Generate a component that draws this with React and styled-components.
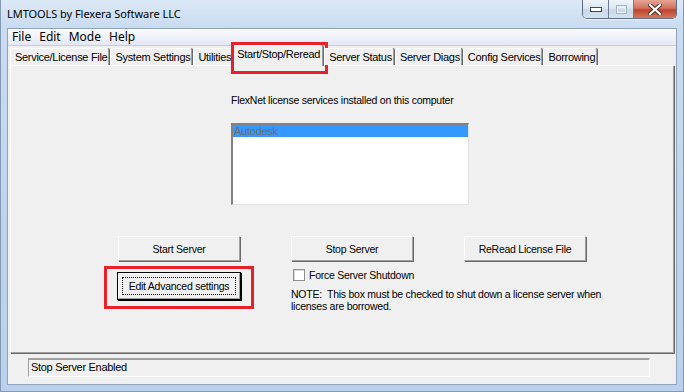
import React from 'react';
import styled, { createGlobalStyle } from 'styled-components';

const Global = createGlobalStyle`
  html, body { margin: 0; padding: 0; background: #fff; }
  body {
    width: 684px; height: 392px; overflow: hidden;
    font-family: "Liberation Sans", Arial, sans-serif;
  }
  * { box-sizing: border-box; }
`;

const Window = styled.div`
  width: 684px;
  height: 392px;
  display: flex;
  flex-direction: column;
  background: linear-gradient(180deg, #dce9f7 0px, #cadcf0 26px, #bed4ec 60%, #b9d1ea 100%);
  border: 1px solid #8399b5;
  border-top: none;
  padding: 0 6px 6px 6px;
`;

const TitleBar = styled.div`
  height: 28px;
  flex: none;
  display: flex;
  align-items: flex-start;
  justify-content: space-between;
`;

const Title = styled.div`
  font-family: "Noto Sans", "Open Sans", sans-serif;
  font-size: 11px;
  color: #000;
  margin-top: 6px;
  letter-spacing: -0.05px;
`;

const Caption = styled.div`
  display: flex;
  height: 19px;
  border: 1px solid #5d6d84;
  border-top: none;
  border-radius: 0 0 5px 5px;
  overflow: hidden;
  box-shadow: 0 1px 0 rgba(255,255,255,0.6);
`;

const CapBtn = styled.div`
  width: ${p => p.$w}px;
  height: 100%;
  display: flex;
  align-items: center;
  justify-content: center;
  border-left: ${p => (p.$first ? 'none' : '1px solid #6d7c92')};
  background: ${p =>
    p.$close
      ? 'linear-gradient(180deg, #e8a493 0%, #d0735f 45%, #c0432c 55%, #d27a5e 100%)'
      : 'linear-gradient(180deg, #eef3fa 0%, #dde7f3 45%, #c9d7e8 55%, #d6e2f0 100%)'};
`;

const Client = styled.div`
  flex: 1;
  display: flex;
  flex-direction: column;
  border: 1px solid #8ea2bb;
  background: #f0f0f0;
`;

const MenuBar = styled.div`
  height: 17px;
  flex: none;
  display: flex;
  align-items: center;
  gap: 8px;
  padding-left: 4px;
  background: linear-gradient(180deg, #fbfcfe 0%, #edf0f9 60%, #e4e8f5 100%);
  border-bottom: 1px solid #c7cde0;
`;

const MenuItem = styled.span`
  font-family: "Noto Sans", "Open Sans", sans-serif;
  font-size: 12px;
  letter-spacing: 0;
  color: #000;
  line-height: 16px;
`;

const TabArea = styled.div`
  flex: none;
  display: flex;
  flex-direction: column;
  padding: 0 1px 0 1px;
`;

const TabStrip = styled.div`
  height: 19px;
  display: flex;
  align-items: flex-end;
  padding-left: 1px;
  position: relative;
  z-index: 2;
`;

const Tab = styled.div`
  position: relative;
  font-size: 11px;
  letter-spacing: -0.3px;
  color: #000;
  white-space: nowrap;
  height: ${p => (p.$active ? 21 : 17)}px;
  line-height: ${p => (p.$active ? 17 : 16)}px;
  padding: 0 ${p => (p.$active ? 2 : 1)}px 0 ${p => (p.$active ? 4 : 4)}px;
  margin: ${p => (p.$active ? '0 -1px -1px -2px' : '0')};
  background: #f0f0f0;
  border-top: 1px solid #fff;
  border-left: 1px solid #fff;
  border-right: 1px solid #a0a0a0;
  box-shadow: 1px 0 0 #696969;
  margin-right: 1px;
  border-radius: 2px 2px 0 0;
`;

const Highlight = styled.div`
  position: relative;
  &::after {
    content: "";
    position: absolute;
    left: ${p => p.$l}px;
    right: ${p => p.$r}px;
    top: ${p => p.$t}px;
    bottom: ${p => p.$b}px;
    border: 3px solid #e8202a;
    pointer-events: none;
  }
`;

const Panel = styled.div`
  height: 288px;
  margin: 0 1px;
  border-top: 1px solid #fff;
  border-left: 1px solid #fff;
  border-right: 1px solid #a0a0a0;
  border-bottom: 1px solid #a0a0a0;
  box-shadow: 1px 1px 0 #696969;
  display: flex;
  flex-direction: column;
  padding-top: 28px;
  font-size: 10.5px;
  letter-spacing: -0.25px;
`;

const ServicesBlock = styled.div`
  margin-left: 220px;
  display: flex;
  flex-direction: column;
`;

const Label = styled.div`
  color: #000;
  line-height: 13px;
`;

const ListBox = styled.div`
  margin-top: 16px;
  width: 238px;
  height: 82px;
  background: #fff;
  border-top: 2px solid #828282;
  border-left: 2px solid #828282;
  border-right: 1px solid #e3e3e3;
  border-bottom: 1px solid #e3e3e3;
`;

const ListRow = styled.div`
  height: 12px;
  font-size: 11px;
  line-height: 12px;
  padding-left: 1px;
  color: ${p => (p.$selected ? '#6d6d6d' : '#000')};
  background: ${p => (p.$selected ? '#3399ff' : 'transparent')};
`;

const ButtonGrid = styled.div`
  margin-top: 31px;
  margin-left: 107px;
  display: grid;
  grid-template-columns: 122px 122px 122px;
  column-gap: 51px;
  row-gap: 8px;
  align-items: start;
`;

const Button = styled.div`
  height: ${p => (p.$default ? 26 : 25)}px;
  display: flex;
  align-items: center;
  justify-content: center;
  color: #000;
  white-space: nowrap;
  background: #f0f0f0;
  border-top: 1px solid #fff;
  border-left: 1px solid #fff;
  border-right: 1px solid #a0a0a0;
  border-bottom: 1px solid #a0a0a0;
  box-shadow: ${p => (p.$default
    ? '0 0 0 1px #000, 1px 1px 0 1px #000'
    : '1px 1px 0 #696969')};
  margin-top: ${p => p.$mt || 0}px;
`;

const FocusRect = styled.span`
  border: 1px dotted #000;
  display: flex;
  align-items: center;
  justify-content: center;
  width: 114px;
  height: 18px;
  line-height: 12px;
  white-space: nowrap;
`;

const ShutdownCol = styled.div`
  grid-column: 2 / span 2;
  display: flex;
  flex-direction: column;
`;

const CheckRow = styled.label`
  display: flex;
  align-items: center;
  gap: 4px;
  margin-left: 2px;
  color: #000;
  height: 12px;
`;

const CheckBox = styled.span`
  width: 12px;
  height: 12px;
  background: #fff;
  border: 1px solid #8f8f8f;
  box-shadow: inset 1px 1px 0 #dcdcdc;
  display: inline-block;
`;

const Note = styled.div`
  margin-top: 7px;
  color: #000;
  line-height: 12px;
  white-space: pre;
`;

const StatusArea = styled.div`
  flex: 1;
  display: flex;
  align-items: flex-start;
  padding: 5px 0 0 20px;
`;

const StatusBox = styled.div`
  width: 622px;
  height: 19px;
  border-top: 2px solid #a0a0a0;
  border-left: 1px solid #a0a0a0;
  border-right: 1px solid #fff;
  border-bottom: 1px solid #fff;
  font-size: 11px;
  line-height: 15px;
  padding-left: 2px;
  color: #000;
  letter-spacing: -0.3px;
`;

const tabs = [
  'Service/License File',
  'System Settings',
  'Utilities',
  'Start/Stop/Reread',
  'Server Status',
  'Server Diags',
  'Config Services',
  'Borrowing',
];

export default function App() {
  return (
    <>
      <Global />
      <Window>
        <TitleBar>
          <Title>LMTOOLS by Flexera Software LLC</Title>
          <Caption>
            <CapBtn $w={25} $first>
              <svg width="12" height="5" viewBox="0 0 12 5">
                <rect x="0.5" y="0.5" width="11" height="4" fill="#fff" stroke="#434c5c" />
              </svg>
            </CapBtn>
            <CapBtn $w={25}>
              <svg width="11" height="9" viewBox="0 0 11 9">
                <rect x="0.5" y="0.5" width="10" height="8" fill="none" stroke="#a6b3c4" />
                <rect x="1.5" y="2.5" width="8" height="5" fill="none" stroke="#eef2f7" />
              </svg>
            </CapBtn>
            <CapBtn $w={43} $close>
              <svg width="14" height="11" viewBox="0 0 14 11">
                <path d="M2 1 L12 10 M12 1 L2 10" stroke="#4a2b26" strokeWidth="4" strokeLinecap="square" />
                <path d="M2 1 L12 10 M12 1 L2 10" stroke="#fff" strokeWidth="2.2" strokeLinecap="square" />
              </svg>
            </CapBtn>
          </Caption>
        </TitleBar>
        <Client>
          <MenuBar>
            <MenuItem>File</MenuItem>
            <MenuItem>Edit</MenuItem>
            <MenuItem>Mode</MenuItem>
            <MenuItem>Help</MenuItem>
          </MenuBar>
          <TabArea>
            <TabStrip>
              {tabs.map(t =>
                t === 'Start/Stop/Reread' ? (
                  <Highlight key={t} $l={-3} $r={-4} $t={-3} $b={-9}>
                    <Tab $active>{t}</Tab>
                  </Highlight>
                ) : (
                  <Tab key={t}>{t}</Tab>
                )
              )}
            </TabStrip>
            <Panel>
              <ServicesBlock>
                <Label>FlexNet license services installed on this computer</Label>
                <ListBox>
                  <ListRow $selected>Autodesk</ListRow>
                </ListBox>
              </ServicesBlock>
              <ButtonGrid>
                <Button>Start Server</Button>
                <Button>Stop Server</Button>
                <Button>ReRead License File</Button>
                <Highlight $l={-14} $r={-14} $t={-3} $b={-10}>
                  <Button $default $mt={4}>
                    <FocusRect>Edit Advanced settings</FocusRect>
                  </Button>
                </Highlight>
                <ShutdownCol>
                  <CheckRow>
                    <CheckBox />
                    Force Server Shutdown
                  </CheckRow>
                  <Note>{'NOTE:  This box must be checked to shut down a license server when\nlicenses are borrowed.'}</Note>
                </ShutdownCol>
              </ButtonGrid>
            </Panel>
          </TabArea>
          <StatusArea>
            <StatusBox>Stop Server Enabled</StatusBox>
          </StatusArea>
        </Client>
      </Window>
    </>
  );
}
